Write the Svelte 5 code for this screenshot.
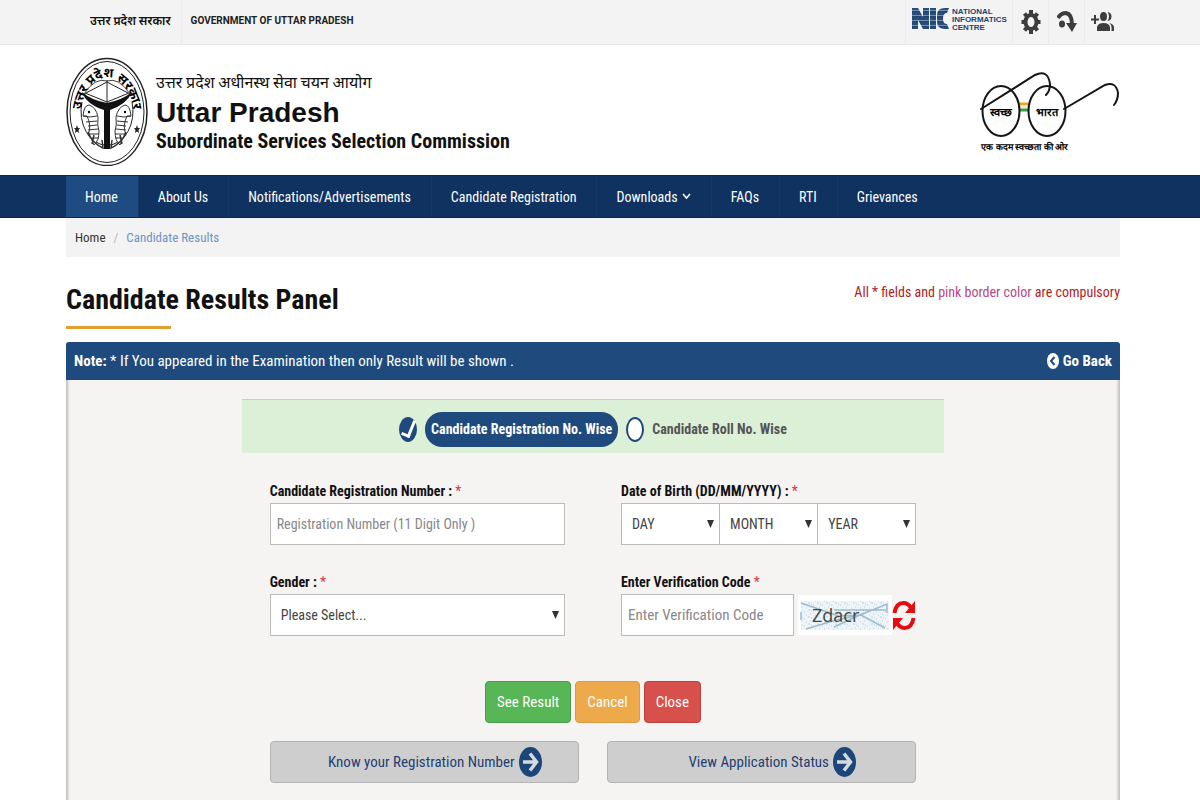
<script>
  const menu = [
    { label: 'Home', active: true },
    { label: 'About Us' },
    { label: 'Notifications/Advertisements' },
    { label: 'Candidate Registration' },
    { label: 'Downloads', more: true },
    { label: 'FAQs' },
    { label: 'RTI' },
    { label: 'Grievances' }
  ];
  const dateParts = ['DAY', 'MONTH', 'YEAR'];
  let mode = $state('registration');
</script>

<div class="page">
  <div class="topbar">
    <div class="wrap topbar-row">
      <div class="gov">
        <a class="gov-hi" href="#up" lang="hi">उत्तर प्रदेश सरकार</a>
        <a class="gov-en" href="#gov">GOVERNMENT OF UTTAR PRADESH</a>
      </div>
      <div class="tools">
        <a class="tool nic" href="#nic" aria-label="National Informatics Centre">
          <svg width="98" height="26" viewBox="0 0 98 26">
            <defs>
              <linearGradient id="stripes" x1="0" y1="0" x2="0" y2="5" gradientUnits="userSpaceOnUse" spreadMethod="repeat">
                <stop offset="0" stop-color="#1f4470" /><stop offset="0.78" stop-color="#2b5180" />
                <stop offset="0.82" stop-color="#6f8fb2" /><stop offset="1" stop-color="#6f8fb2" />
              </linearGradient>
            </defs>
            <g fill="url(#stripes)">
              <path d="M2 2h6l5 9V2h6v21h-6L8 14v9H2z" />
              <path d="M20 2h6v21h-6z" />
              <path d="M39 2h-4q-8 0-8 7v7q0 7 8 7h4l-2-5q-4 0-4-5.500t4-5.500z" />
            </g>
            <g class="nic-text" fill="#1f4470">
              <text x="42" y="8">NATIONAL</text>
              <text x="42" y="16">INFORMATICS</text>
              <text x="42" y="24">CENTRE</text>
            </g>
          </svg>
        </a>
        <button class="tool" aria-label="Settings">
          <svg width="20" height="26" viewBox="0 0 20 26">
            <g fill="none" stroke="#3d3d3d">
              <ellipse cx="10" cy="13" rx="5.500" ry="7" stroke-width="4" />
              <path d="M10 1v4M10 21v4M.5 13H4M16 13h3.500M3.500 4.500l2.500 3M14 18.500l2.500 3M16.500 4.500l-2.500 3M6 18.500l-2.500 3" stroke-width="4" />
            </g>
          </svg>
        </button>
        <button class="tool" aria-label="Skip to content">
          <svg width="20" height="24" viewBox="0 0 20 24">
            <ellipse cx="5" cy="14" rx="3" ry="3.500" fill="#3d3d3d" />
            <path d="M1 8Q4 3 9 3q6 1 6 12" fill="none" stroke="#3d3d3d" stroke-width="4" />
            <path d="M9 13l6 9 5-9z" fill="#3d3d3d" />
          </svg>
        </button>
        <button class="tool" aria-label="Social links">
          <svg width="24" height="22" viewBox="0 0 24 22" fill="#3d3d3d">
            <path d="M3 4h2v3.500h3v2H5V13H3V9.500H0v-2h3z" />
            <ellipse cx="12.500" cy="5.500" rx="3.500" ry="4.500" />
            <path d="M16.500 1q4 .5 4 4.500t-4 4.500q1.500-2 1.500-4.500T16.500 1z" />
            <path d="M6 20v-4q1-4 6.500-4t6.500 4v4z" />
            <path d="M18.500 12q4 1 4.500 4v4h-2.500v-4q0-2-2-4z" />
          </svg>
        </button>
      </div>
    </div>
  </div>

  <header class="wrap masthead">
    <a class="brand" href="#home">
      <svg width="82" height="110" viewBox="0 0 82 110" role="img" aria-label="Uttar Pradesh emblem">
        <defs><path id="arc" d="M14 64A27 43 0 0 1 68 64" /></defs>
        <g fill="none" stroke="#222">
          <ellipse cx="41" cy="56" rx="40" ry="53.500" stroke-width="1.500" />
          <ellipse cx="41" cy="56" rx="37" ry="50.500" />
          <path d="M16 46A26 34 0 1 0 66 46" />
        </g>
        <text class="arc-text" lang="hi"><textPath href="#arc" startOffset="50%" text-anchor="middle">उत्तर प्रदेश सरकार</textPath></text>
        <path d="M18 38Q29 21 41 25 53 21 64 38" fill="none" stroke="#444" />
        <path d="M19 37L41 46 63 37M41 24v26M20 37L41 26 62 37" fill="none" stroke="#222" />
        <path d="M16 36Q20 48 38 54L38 93h6l0-39Q61 48 66 36 56 44 41 47 25 44 16 36z" fill="#111" />
        <g fill="#fff" stroke="#333">
          <path d="M17 60q1-11 6-11 7 2 9 12-1 9 1 14 0 10-5 14-2-7-6-10 4-9-1-19zM17 60q7 2 14 0" />
          <path d="M20 66l11-1M22 70l9-1M22 74l10-1M22 78l11 0M26 82l7 0" />
          <path d="M65 60q-1-11-6-11-7 2-9 12 1 9-1 14 0 10 5 14 2-7 6-10-4-9 1-19zM65 60q-7 2-14 0" />
          <path d="M62 66l-11-1M60 70l-9-1M60 74l-10-1M60 78l-11 0M56 82l-7 0" />
        </g>
        <circle cx="23" cy="56" r="1.200" /><circle cx="59" cy="56" r="1.200" />
        <path d="M22 76q4 11 15 16l-1-8M60 76q-4 11-15 16l1-8M28 79l-2 9M54 79l2 9" fill="none" stroke="#333" stroke-width="1.500" />
        <path d="M11 69l1 3h2l-1.500 2 .5 3-2-1.500L9 77l.5-3L8 72h2zM71 69l1 3h2l-1.500 2 .5 3-2-1.500L69 77l.5-3L68 72h2z" fill="#222" />
      </svg>
      <span class="names">
        <span class="name-hi" lang="hi">उत्तर प्रदेश अधीनस्थ सेवा चयन आयोग</span>
        <strong class="name-en">Uttar Pradesh</strong>
        <strong class="name-sub">Subordinate Services Selection Commission</strong>
      </span>
    </a>
    <a class="swachh" href="#swachh" aria-label="Swachh Bharat">
      <svg width="144" height="84" viewBox="0 0 144 84">
        <path d="M43 33h10" stroke="#e9a32b" stroke-width="3" />
        <path d="M43 36h10" stroke="#f4efc8" stroke-width="3" />
        <path d="M43 39h10" stroke="#3f9a4b" stroke-width="3" />
        <g fill="none" stroke="#161616" stroke-width="2" stroke-linecap="round">
          <ellipse cx="25" cy="40" rx="18.500" ry="25" />
          <ellipse cx="71" cy="40" rx="18.500" ry="25" />
          <path d="M5 38L59 4q13-6 15 9 0 7-4 11" />
          <path d="M88 38l41-24q11-4 13 8 0 7-4 12" />
        </g>
        <g class="lens" lang="hi">
          <text x="25" y="45" text-anchor="middle">स्वच्छ</text>
          <text x="71" y="45" text-anchor="middle">भारत</text>
        </g>
        <text class="motto" lang="hi" x="49" y="79" text-anchor="middle">एक कदम स्वच्छता की ओर</text>
      </svg>
    </a>
  </header>

  <nav class="menu">
    <ul class="wrap">
      {#each menu as item}
        <li>
          <a href="#{item.label}" class:active={item.active}>
            {item.label}
            {#if item.more}
              <svg width="9" height="7" viewBox="0 0 9 7"><path d="M1 1l3.500 4L8 1" fill="none" stroke="#fff" stroke-width="1.500" /></svg>
            {/if}
          </a>
        </li>
      {/each}
    </ul>
  </nav>

  <main class="wrap">
    <div class="crumbs">
      <a href="#home">Home</a><span class="slash">/</span><span class="current">Candidate Results</span>
    </div>

    <div class="heading">
      <h1>Candidate Results Panel</h1>
      <p>All * fields and <span>pink border color</span> are compulsory</p>
    </div>

    <section class="panel">
      <div class="panel-head">
        <p><b>Note:</b> * If You appeared in the Examination then only Result will be shown .</p>
        <a href="#back">
          <svg width="12" height="16" viewBox="0 0 12 16"><ellipse cx="6" cy="8" rx="6" ry="8" fill="#fff" /><path d="M7.500 4L4 8l3.500 4" fill="none" stroke="#1e4a7d" stroke-width="2" /></svg>
          Go Back
        </a>
      </div>

      <form class="panel-body" onsubmit={(e) => e.preventDefault()}>
        <div class="modes">
          <input type="radio" id="by-reg" value="registration" bind:group={mode} />
          <label for="by-reg">Candidate Registration No. Wise</label>
          <input type="radio" id="by-roll" value="roll" bind:group={mode} />
          <label for="by-roll">Candidate Roll No. Wise</label>
        </div>

        <div class="fields">
          <div class="field">
            <label for="reg">Candidate Registration Number : <i>*</i></label>
            <input id="reg" type="text" placeholder="Registration Number (11 Digit Only )" />
          </div>
          <div class="field">
            <label for="DAY">Date of Birth (DD/MM/YYYY) : <i>*</i></label>
            <div class="dates">
              {#each dateParts as part}
                <div class="select">
                  <select id={part} aria-label={part}><option>{part}</option></select>
                  <svg width="7" height="8" viewBox="0 0 7 8"><path d="M0 0h7L3.500 8z" fill="#333" /></svg>
                </div>
              {/each}
            </div>
          </div>
          <div class="field">
            <label for="gender">Gender : <i>*</i></label>
            <div class="select">
              <select id="gender"><option>Please Select...</option></select>
              <svg width="7" height="8" viewBox="0 0 7 8"><path d="M0 0h7L3.500 8z" fill="#333" /></svg>
            </div>
          </div>
          <div class="field">
            <label for="code">Enter Verification Code <i>*</i></label>
            <div class="verify">
              <input id="code" type="text" placeholder="Enter Verification Code" />
              <svg class="captcha" width="94" height="40" viewBox="0 0 94 40" role="img" aria-label="Verification code">
                <defs>
                  <pattern id="speck" width="9" height="7" patternUnits="userSpaceOnUse">
                    <path d="M1 1h2M6 3h1M3 5h1M8 6h1M4 2h1" stroke="#b4d3e0" />
                  </pattern>
                </defs>
                <rect width="94" height="40" fill="#fff" />
                <rect x="3" y="6" width="88" height="29" fill="#eef4f7" />
                <rect x="3" y="6" width="88" height="29" fill="url(#speck)" />
                <g fill="none" stroke="#9bbccf" stroke-width="1.500">
                  <path d="M3 8l38 13 22-1 24 13M8 34l30-9 24-5 27-11v9M36 15h52M36 32l30-14M3 17v8" />
                </g>
                <text x="14" y="27">Zdacr</text>
              </svg>
              <button class="refresh" type="button" aria-label="Refresh code">
                <svg width="24" height="31" viewBox="0 0 24 31" fill="none" stroke="#e60d12" stroke-width="4">
                  <path d="M2.500 13Q4 3 11.500 3 16 3 19 8M21.500 18Q20 28 12.500 28 8 28 5 23" />
                  <path d="M23 1v12h-10zM1 30V18h10z" fill="#e60d12" stroke="none" />
                </svg>
              </button>
            </div>
          </div>
        </div>

        <div class="actions">
          <button class="btn see" type="submit">See Result</button>
          <button class="btn cancel" type="reset">Cancel</button>
          <button class="btn close" type="button">Close</button>
        </div>

        <div class="links">
          {#each ['Know your Registration Number', 'View Application Status'] as text}
            <button class="btn link" type="button">
              {text}
              <svg width="23" height="30" viewBox="0 0 23 30"><ellipse cx="11.500" cy="15" rx="11.500" ry="15" fill="#1c457a" /><path d="M4 15h13M11 6.500l6.500 8.500L11 23.500" fill="none" stroke="#d6dade" stroke-width="3.500" /></svg>
            </button>
          {/each}
        </div>
      </form>
    </section>
  </main>
</div>

<style>
  :global(body) { margin: 0; background: #fff; }
  .page {
    min-height: 100vh;
    display: flex;
    flex-direction: column;
    font: 14px/20px "Roboto Condensed", "Liberation Sans", "Noto Sans Devanagari", sans-serif;
    color: #111;
  }
  .page :global(*) { box-sizing: border-box; }
  a { color: inherit; text-decoration: none; }
  button, input, select { font: inherit; color: inherit; }
  button { cursor: pointer; }
  svg { display: block; flex: none; }
  p, h1, ul { margin: 0; padding: 0; }
  .wrap { padding: 0 80px 0 66px; }

  .topbar { background: #f3f3f3; border-bottom: 1px solid #e8e8e8; }
  .topbar-row { display: flex; justify-content: space-between; height: 44px; }
  .gov { display: flex; align-items: center; padding-left: 24px; }
  .gov a { height: 44px; line-height: 42px; }
  .gov-hi { font-size: 12px; font-weight: 600; padding-right: 10px; border-right: 1px solid #ebebeb; }
  .gov-en { font-family: Roboto, sans-serif; font-size: 10px; font-weight: 700; padding-left: 9px; color: #222; }
  .tools { display: flex; }
  .tool {
    display: flex; align-items: center; justify-content: center;
    width: 36px; border: 0; border-left: 1px solid #ebebeb; background: none; padding: 0;
  }
  .nic { width: 107px; padding-bottom: 6px; }
  .nic-text { font: 700 8px "Liberation Sans", sans-serif; }

  .masthead { display: flex; justify-content: space-between; align-items: center; height: 130px; padding-top: 2px; }
  .brand { display: flex; align-items: center; gap: 8px; }
  .names { display: flex; flex-direction: column; }
  .arc-text { font: 700 13px "Noto Sans Devanagari", sans-serif; }
  .name-hi { font-size: 16px; line-height: 28px; }
  .name-en { font: 700 28px/32px "Liberation Sans", sans-serif; }
  .name-sub { font-size: 20px; line-height: 24px; }
  .swachh { padding-top: 4px; }
  .lens { font: 600 11px sans-serif; }
  .motto { font: 600 9px sans-serif; }

  .menu { background: #0f3261; border-top: 1px solid #0b2850; border-bottom: 1px solid #0b2850; color: #fff; }
  .menu ul { display: flex; flex-wrap: wrap; list-style: none; }
  .menu li { border-right: 1px solid #143a64; }
  .menu li:last-child { border: 0; }
  .menu a { display: flex; align-items: center; gap: 4px; height: 41px; padding: 0 20px 0 19px; }
  .menu .active { background: #1e4c82; }

  main { flex: 1; display: flex; flex-direction: column; }
  .crumbs { height: 39px; padding: 0 9px; background: #f3f3f3; line-height: 40px; font-size: 13px; color: #333; }
  .slash { padding: 0 8px; color: #bbb; }
  .current { color: #6f93c0; }
  .heading { display: flex; justify-content: space-between; padding: 24px 0 13px; }
  h1 { font-size: 28px; line-height: 37px; padding-bottom: 8px; }
  h1::after { content: ""; display: block; width: 105px; height: 3px; margin-top: 8px; margin-bottom: -8px; background: #dfa030; }
  .heading p { color: #b0221f; line-height: 22px; }
  .heading p span { color: #b8478a; }

  .panel { flex: 1; display: flex; flex-direction: column; }
  .panel-head {
    display: flex; justify-content: space-between; align-items: center; min-height: 38px; padding: 0 8px;
    background: #1e4a7d; border-radius: 3px 3px 0 0; color: #fff; font-size: 15px;
  }
  .panel-head a { display: flex; align-items: center; gap: 4px; font-weight: 700; }
  .panel-body {
    flex: 1; display: flex; flex-direction: column; align-items: center; padding: 19px 0 17px;
    background: linear-gradient(90deg, #c0bdbd, transparent 4px), linear-gradient(270deg, #c0bdbd, transparent 4px), #f6f3f3;
  }
  .modes, .fields, .actions, .links { width: 66.667%; }
  .modes {
    display: flex; align-items: center; justify-content: center; gap: 8px; height: 54px; padding-top: 5px;
    background: #dcefd7; border-top: 1px solid #c3d3bf; font-weight: 700; color: #555;
  }
  .modes input {
    appearance: none; display: grid; place-items: center; width: 18px; height: 25px; margin: 0;
    border: 2px solid #1e4a7d; border-radius: 50%; background: #fff;
  }
  .modes input:checked { background: #1e4a7d; }
  .modes input:checked::after {
    content: ""; width: 6px; height: 15px; margin-bottom: 2px; border: solid #fff; border-width: 0 3px 3px 0; transform: rotate(22deg);
  }
  .modes label { height: 35px; line-height: 35px; border-radius: 17px; }
  .modes input:checked + label { padding: 0 6px; background: #1e4a7d; color: #fff; }

  .fields { display: grid; grid-template-columns: 1fr 1fr; gap: 27px 56px; padding: 28px 28px 0; }
  .field { min-width: 0; }
  .field label { display: block; font-weight: 700; line-height: 20px; padding-bottom: 2px; }
  .field i { font-style: normal; font-weight: 400; color: #d43a45; }
  .field input, .field select {
    width: 100%; min-width: 0; height: 42px; padding: 0 6px; border: 1px solid #bbb; border-radius: 0; background: #fff; color: #444;
  }
  .field input::placeholder { color: #888; opacity: 1; }
  .select { position: relative; flex: 1; }
  .field select { appearance: none; padding: 0 10px; }
  .select svg { position: absolute; right: 6px; top: 17px; pointer-events: none; }
  .dates { display: flex; }
  .dates .select + .select { margin-left: -1px; }
  .verify { display: flex; align-items: center; }
  .field .verify input { flex: 1; font-size: 15px; }
  .captcha { margin-left: 4px; }
  .captcha text { font: 18px "Open Sans", sans-serif; fill: #444; }
  .refresh { border: 0; background: none; padding: 0; }

  .actions { display: flex; justify-content: center; gap: 4px; padding-top: 45px; }
  .btn { height: 42px; padding: 0 11px; border: 1px solid; border-radius: 4px; color: #fff; font-size: 15px; }
  .see { background: #57b757; border-color: #4a9d4a; }
  .cancel { background: #eda94a; border-color: #d99a42; }
  .close { background: #d8504c; border-color: #b9433f; }
  .links { display: grid; grid-template-columns: 1fr 1fr; gap: 28px; padding: 18px 28px 0; }
  .link { display: flex; align-items: center; justify-content: center; gap: 4px; padding-left: 32px; background: #cececf; border-color: #b3b3b5; color: #1f3f70; }
</style>
